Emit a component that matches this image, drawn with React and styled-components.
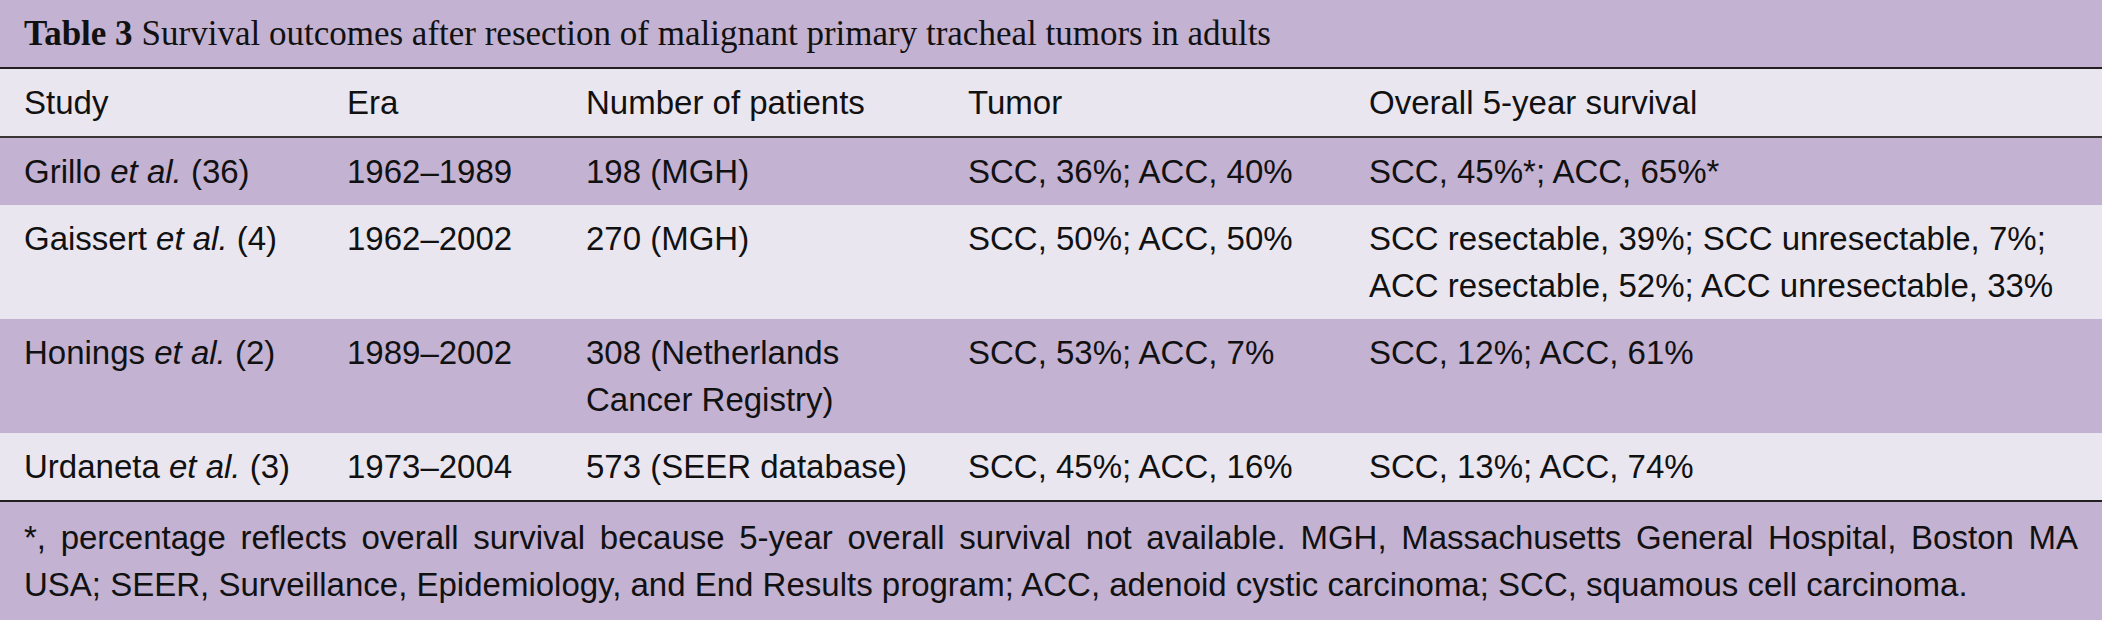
import React from 'react';
import styled, { createGlobalStyle } from 'styled-components';

const Purple = '#c3b2d1';
const Lilac = '#e9e6f0';
const Ink = '#111111';

const GlobalStyle = createGlobalStyle`
  body {
    margin: 0;
    background: #ffffff;
  }
`;

const Wrapper = styled.div`
  width: 2102px;
  background-color: ${Purple};
  color: ${Ink};
  font-family: 'Liberation Sans', Arial, sans-serif;
  font-size: 33px;
`;

const Caption = styled.div`
  display: flex;
  align-items: center;
  height: 67px;
  padding: 0 24px;
  font-family: 'Liberation Serif', 'Times New Roman', serif;
  font-size: 35px;
  border-bottom: 2px solid #231f20;
`;

const CaptionLabel = styled.b`
  font-weight: 700;
  margin-right: 9px;
`;

const Table = styled.table`
  width: 100%;
  table-layout: fixed;
  border-collapse: collapse;
`;

const Row = styled.tr`
  background-color: ${({ $shade }) => ($shade === 'dark' ? Purple : Lilac)};
  border-bottom: ${({ $rule }) => ($rule ? $rule : 'none')};
`;

const HeadCell = styled.th`
  text-align: left;
  font-weight: 400;
  line-height: 47px;
  padding: 10px 24px;
  vertical-align: top;
`;

const Cell = styled.td`
  line-height: 47px;
  padding: 10px 24px;
  vertical-align: top;
`;

const Footnote = styled.div`
  padding: 12px 24px;
  line-height: 47px;
`;

const FootLine = styled.div`
  text-align: ${({ $justify }) => ($justify ? 'justify' : 'left')};
  text-align-last: ${({ $justify }) => ($justify ? 'justify' : 'auto')};
`;

const columns = [323, 239, 382, 401];

const rows = [
  {
    author: 'Grillo',
    ref: '(36)',
    era: '1962–1989',
    patients: '198 (MGH)',
    tumor: 'SCC, 36%; ACC, 40%',
    survival: ['SCC, 45%*; ACC, 65%*'],
    shade: 'dark',
  },
  {
    author: 'Gaissert',
    ref: '(4)',
    era: '1962–2002',
    patients: '270 (MGH)',
    tumor: 'SCC, 50%; ACC, 50%',
    survival: [
      'SCC resectable, 39%; SCC unresectable, 7%;',
      'ACC resectable, 52%; ACC unresectable, 33%',
    ],
    shade: 'light',
  },
  {
    author: 'Honings',
    ref: '(2)',
    era: '1989–2002',
    patients: '308 (Netherlands Cancer Registry)',
    tumor: 'SCC, 53%; ACC, 7%',
    survival: ['SCC, 12%; ACC, 61%'],
    shade: 'dark',
  },
  {
    author: 'Urdaneta',
    ref: '(3)',
    era: '1973–2004',
    patients: '573 (SEER database)',
    tumor: 'SCC, 45%; ACC, 16%',
    survival: ['SCC, 13%; ACC, 74%'],
    shade: 'light',
  },
];

const App = () => {
  return (
    <Wrapper>
      <GlobalStyle />
      <Caption>
        <CaptionLabel>Table 3</CaptionLabel>
        Survival outcomes after resection of malignant primary tracheal tumors
        in adults
      </Caption>
      <Table>
        <colgroup>
          {columns.map((w) => (
            <col key={w} style={{ width: w }} />
          ))}
          <col />
        </colgroup>
        <thead>
          <Row $shade="light" $rule="2px solid #3a3638">
            <HeadCell>Study</HeadCell>
            <HeadCell>Era</HeadCell>
            <HeadCell>Number of patients</HeadCell>
            <HeadCell>Tumor</HeadCell>
            <HeadCell>Overall 5-year survival</HeadCell>
          </Row>
        </thead>
        <tbody>
          {rows.map((row, i) => (
            <Row
              key={row.author}
              $shade={row.shade}
              $rule={i === rows.length - 1 ? '2px solid #231f20' : null}
            >
              <Cell>
                {row.author} <i>et al.</i> {row.ref}
              </Cell>
              <Cell>{row.era}</Cell>
              <Cell>{row.patients}</Cell>
              <Cell>{row.tumor}</Cell>
              <Cell>
                {row.survival.map((line) => (
                  <div key={line}>{line}</div>
                ))}
              </Cell>
            </Row>
          ))}
        </tbody>
      </Table>
      <Footnote>
        <FootLine $justify>
          *, percentage reflects overall survival because 5-year overall
          survival not available. MGH, Massachusetts General Hospital, Boston MA
        </FootLine>
        <FootLine>
          USA; SEER, Surveillance, Epidemiology, and End Results program; ACC,
          adenoid cystic carcinoma; SCC, squamous cell carcinoma.
        </FootLine>
      </Footnote>
    </Wrapper>
  );
};

export default App;
